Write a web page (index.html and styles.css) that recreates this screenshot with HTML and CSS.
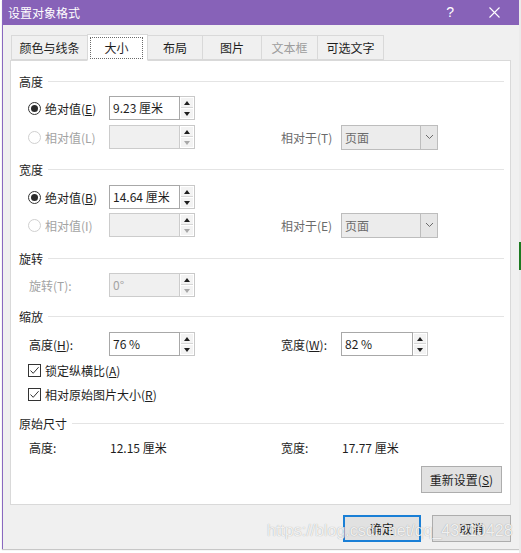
FILE: index.html
```html
<!DOCTYPE html>
<html lang="zh">
<head>
<meta charset="utf-8">
<title>设置对象格式</title>
<link rel="stylesheet" href="styles.css">
</head>
<body>
<div class="screen">
  <div class="gutter"></div>
  <div class="dialog">
    <div class="titlebar">
      <span class="title">设置对象格式</span>
      <span class="help">?</span>
      <svg class="close" width="11" height="11" viewBox="0 0 11 11"><path d="M0.5 0.5 L10.5 10.5 M10.5 0.5 L0.5 10.5" stroke="#fff" stroke-width="1.1" fill="none"/></svg>
    </div>
    <div class="dlg-body">
      <div class="tabs">
        <div class="tab t1">颜色与线条</div>
        <div class="tab t2 active"><span class="focus">大小</span></div>
        <div class="tab t3">布局</div>
        <div class="tab t4">图片</div>
        <div class="tab t5 disabled">文本框</div>
        <div class="tab t6">可选文字</div>
      </div>
      <div class="panel">
        <div class="sec">高度</div>
        <div class="row m5">
          <div class="lcol"><span class="radio on"></span><span>绝对值(<u>E</u>)</span></div>
          <div class="spin">
            <div class="field">9.23 厘米</div>
            <div class="btns"><span class="up"></span><span class="down"></span></div>
          </div>
        </div>
        <div class="row m5">
          <div class="lcol dis"><span class="radio off"></span><span>相对值(L)</span></div>
          <div class="spin off">
            <div class="field"></div>
            <div class="btns"><span class="up"></span><span class="down"></span></div>
          </div>
          <div class="rlab">相对于(T)</div>
          <div class="select"><span class="sel-text">页面</span><span class="sel-arrow"><svg width="9" height="6" viewBox="0 0 9 6"><path d="M1 1 L4.5 4.5 L8 1" stroke="#6a6a6a" stroke-width="1" fill="none"/></svg></span></div>
        </div>

        <div class="sec m10">宽度</div>
        <div class="row m6">
          <div class="lcol"><span class="radio on"></span><span>绝对值(<u>B</u>)</span></div>
          <div class="spin">
            <div class="field">14.64 厘米</div>
            <div class="btns"><span class="up"></span><span class="down"></span></div>
          </div>
        </div>
        <div class="row m4">
          <div class="lcol dis"><span class="radio off"></span><span>相对值(I)</span></div>
          <div class="spin off">
            <div class="field"></div>
            <div class="btns"><span class="up"></span><span class="down"></span></div>
          </div>
          <div class="rlab">相对于(E)</div>
          <div class="select"><span class="sel-text">页面</span><span class="sel-arrow"><svg width="9" height="6" viewBox="0 0 9 6"><path d="M1 1 L4.5 4.5 L8 1" stroke="#6a6a6a" stroke-width="1" fill="none"/></svg></span></div>
        </div>

        <div class="sec m11">旋转</div>
        <div class="row m5">
          <div class="lcol dis"><span class="plain">旋转(T):</span></div>
          <div class="spin off">
            <div class="field">0°</div>
            <div class="btns"><span class="up"></span><span class="down"></span></div>
          </div>
        </div>

        <div class="sec m9">缩放</div>
        <div class="row m6">
          <div class="lcol"><span class="plain">高度(<u>H</u>):</span></div>
          <div class="spin">
            <div class="field">76 %</div>
            <div class="btns"><span class="up"></span><span class="down"></span></div>
          </div>
          <div class="rlab dark">宽度(<u>W</u>):</div>
          <div class="spin wide">
            <div class="field">82 %</div>
            <div class="btns"><span class="up"></span><span class="down"></span></div>
          </div>
        </div>
        <div class="crow m4">
          <span class="check"><svg width="11" height="11" viewBox="0 0 11 11"><path d="M1.5 5.5 L4.2 8.3 L9.6 2.2" stroke="#333" stroke-width="1" fill="none"/></svg></span>
          <span>锁定纵横比(<u>A</u>)</span>
        </div>
        <div class="crow m4">
          <span class="check"><svg width="11" height="11" viewBox="0 0 11 11"><path d="M1.5 5.5 L4.2 8.3 L9.6 2.2" stroke="#333" stroke-width="1" fill="none"/></svg></span>
          <span>相对原始图片大小(<u>R</u>)</span>
        </div>

        <div class="sec m9">原始尺寸</div>
        <div class="trow m4">
          <div class="lcol"><span class="plain">高度:</span></div>
          <div class="val">12.15 厘米</div>
          <div class="rlab dark">宽度:</div>
          <div class="val">17.77 厘米</div>
        </div>

        <div class="btn reset">重新设置(<u>S</u>)</div>
      </div>
      <div class="footer">
        <div class="btn ok">确定</div>
        <div class="btn cancel">取消</div>
      </div>
    </div>
  </div>
  <div class="outside"><div class="green"></div></div>
  <div class="watermark">https://blog.csdn.net/qq_43210428</div>
</div>
</body>
</html>
```
FILE: styles.css
```css
* { box-sizing: border-box; }
html, body { margin: 0; padding: 0; }
body {
  background: #ffffff;
  font-family: "Noto Sans CJK SC", "Microsoft YaHei", sans-serif;
  font-size: 12px;
  color: #1e1e1e;
}
u { text-decoration: underline; text-underline-offset: 1px; }

.screen {
  width: 521px;
  height: 553px;
  display: flex;
  align-items: flex-start;
  overflow: hidden;
  position: relative;
}
.gutter { width: 2px; height: 553px; }
.dialog {
  width: 517px;
  height: 549px;
  border-left: 1px solid #8a68c0;
  background: #f0f0f0;
  display: flex;
  flex-direction: column;
  box-shadow: 0 1px 1px rgba(0,0,0,0.22);
}
.outside { width: 2px; height: 553px; background: #ebebeb; }
.outside .green { margin-top: 242px; height: 28px; background: #1d7a20; }

/* title bar */
.titlebar {
  height: 25px;
  background: #8762b8;
  color: #ffffff;
  display: flex;
  align-items: center;
  padding-left: 5px;
  padding-right: 19px;
}
.title { font-size: 12px; line-height: 25px; }
.help {
  margin-left: auto;
  font-family: "Liberation Sans", sans-serif;
  font-size: 14px;
  line-height: 25px;
  margin-right: 35px;
}
.close { display: block; }

/* body */
.dlg-body {
  flex: 1;
  padding: 10px 8px 0 7px;
  display: flex;
  flex-direction: column;
}

.tabs {
  display: flex;
  align-items: flex-end;
  height: 25px;
  margin-left: 1px;
}
.tab {
  height: 25px;
  border: 1px solid #d9d9d9;
  border-left: none;
  background: #f0f0f0;
  text-align: center;
  line-height: 23px;
  color: #1e1e1e;
}
.tab.t1 { width: 77px; border-left: 1px solid #d9d9d9; }
.tab.t2 { width: 60px; }
.tab.t3 { width: 55px; }
.tab.t4 { width: 59px; }
.tab.t5 { width: 56px; }
.tab.t6 { width: 66px; }
.tab.disabled { color: #9d9d9d; }
.tab.active {
  height: 27px;
  margin-bottom: -1px;
  background: #ffffff;
  border-left: 1px solid #d9d9d9;
  border-bottom: 1px solid #ffffff;
  position: relative;
  z-index: 1;
  padding: 2px 4px 1px 2px;
  display: flex;
  margin-left: -1px;
  width: 61px;
}
.focus {
  flex: 1;
  border: 1px dotted #6a6a6a;
  line-height: 19px;
}

.panel {
  background: #ffffff;
  border: 1px solid #d9d9d9;
  padding: 10px 0 11px 0;
  display: flex;
  flex-direction: column;
}

.sec {
  display: flex;
  align-items: center;
  height: 20px;
  padding-left: 8px;
  padding-right: 6px;
  color: #1e1e1e;
}
.sec::after {
  content: "";
  flex: 1;
  height: 1px;
  background: #e4e4e4;
  margin-left: 5px;
}

.m4 { margin-top: 4px; }
.m5 { margin-top: 5px; }
.m6 { margin-top: 6px; }
.m9 { margin-top: 9px; }
.m10 { margin-top: 10px; }
.m11 { margin-top: 11px; }

.row {
  display: flex;
  align-items: center;
  height: 24px;
  padding-left: 17px;
}
.lcol {
  width: 81px;
  display: flex;
  align-items: center;
  flex-shrink: 0;
}
.lcol.dis { color: #a3a3a3; }
.plain { padding-left: 1px; }

.radio {
  width: 13px;
  height: 13px;
  border-radius: 50%;
  margin-right: 4px;
  display: flex;
  align-items: center;
  justify-content: center;
  flex-shrink: 0;
}
.radio.on { border: 1px solid #333333; }
.radio.on::after {
  content: "";
  width: 7px;
  height: 7px;
  border-radius: 50%;
  background: #2b2b2b;
}
.radio.off { border: 1px solid #d0d0d0; }

/* spinner */
.spin {
  width: 86px;
  height: 24px;
  display: flex;
  flex-shrink: 0;
}
.spin.wide { width: 87px; }
.spin .field {
  flex: 1;
  border: 1px solid #a8a8a8;
  background: #ffffff;
  padding-left: 3px;
  line-height: 22px;
  color: #1e1e1e;
}
.spin.off .field {
  background: #f0f0f0;
  border-color: #cccccc;
  color: #a3a3a3;
}
.btns {
  width: 15px;
  display: flex;
  flex-direction: column;
  border: 1px solid #c9c9c9;
  border-left: none;
  background: #ffffff;
}
.btns span {
  flex: 1;
  display: flex;
  align-items: center;
  justify-content: center;
  background: #f3f3f3;
  margin: 1px;
}
.btns .up { margin-bottom: 0; border-bottom: 1px solid #d6d6d6; }
.btns .up::after {
  content: "";
  border-left: 3.5px solid transparent;
  border-right: 3.5px solid transparent;
  border-bottom: 4px solid #1e1e1e;
}
.btns .down::after {
  content: "";
  border-left: 3.5px solid transparent;
  border-right: 3.5px solid transparent;
  border-top: 4px solid #1e1e1e;
}
.spin.off .btns .down::after { border-top-color: #a8a8a8; }

.rlab {
  margin-left: 86px;
  width: 60px;
  flex-shrink: 0;
  color: #6b6b6b;
}
.rlab.dark { color: #1e1e1e; }

.select {
  width: 97px;
  height: 25px;
  border: 1px solid #bdbdbd;
  background: #ececec;
  display: flex;
  align-items: stretch;
}
.sel-text {
  flex: 1;
  padding-left: 3px;
  line-height: 23px;
  color: #6b6b6b;
}
.sel-arrow {
  width: 17px;
  border-left: 1px solid #bdbdbd;
  background: #e6e6e6;
  display: flex;
  align-items: center;
  justify-content: center;
}

.crow {
  display: flex;
  align-items: center;
  height: 20px;
  padding-left: 17px;
}
.check {
  width: 13px;
  height: 13px;
  border: 1px solid #333333;
  margin-right: 4px;
  display: flex;
  align-items: center;
  justify-content: center;
  background: #ffffff;
}

.trow {
  display: flex;
  align-items: center;
  height: 20px;
  padding-left: 17px;
}
.val { width: 86px; padding-left: 1px; flex-shrink: 0; }

.btn {
  height: 27px;
  border: 1px solid #adadad;
  background: #e1e1e1;
  text-align: center;
  line-height: 25px;
  color: #1e1e1e;
}
.reset {
  width: 81px;
  align-self: flex-end;
  margin-right: 8px;
  margin-top: 9px;
}
.footer {
  margin-top: 10px;
  display: flex;
  justify-content: flex-end;
  gap: 11px;
}
.ok {
  width: 78px;
  border: 2px solid #1a7fd6;
  line-height: 23px;
}
.cancel { width: 79px; }

.watermark {
  position: absolute;
  left: 267px;
  top: 521px;
  font-family: "Liberation Sans", sans-serif;
  font-size: 16px;
  line-height: 20px;
  color: rgba(255,255,255,0.85);
  text-shadow: 0 0 1px rgba(0,0,0,0.35);
  white-space: nowrap;
}
```
